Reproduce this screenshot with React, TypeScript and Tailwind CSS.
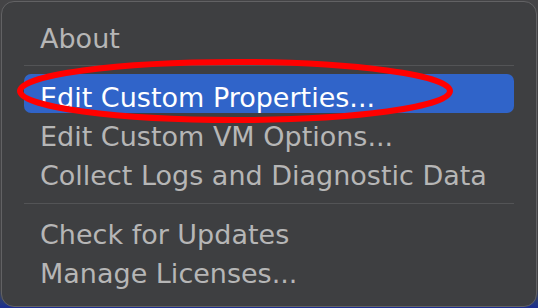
const ITEMS_TOP = ["About"];
const ITEMS_MID = ["Edit Custom Properties...", "Edit Custom VM Options...", "Collect Logs and Diagnostic Data"];
const ITEMS_BOTTOM = ["Check for Updates", "Manage Licenses..."];

function Item({ label, active = false }: { label: string; active?: boolean }) {
  return (
    <div
      className={
        active
          ? "h-[39px] rounded-[7px] bg-[#3064c9] pl-[16px] pt-[8px] leading-[31px] text-white"
          : "h-[39px] pl-[16px] pt-[8px] leading-[31px] text-[#b6b6b6]"
      }
    >
      {label}
    </div>
  );
}

function Separator({ offset }: { offset: "first" | "second" }) {
  return (
    <div className={offset === "first" ? "h-[20px] pt-[11px]" : "h-[20px] pt-[12px]"}>
      <div className="h-px bg-[#535456]" />
    </div>
  );
}

export default function App() {
  return (
    <div className="relative h-[308px] w-[538px] overflow-hidden bg-gradient-to-b from-[#444446] via-[#444446] via-[94%] to-[#1b2c92] p-px">
      <div
        className="h-[306px] w-[536px] rounded-[13px] border border-[#626264] bg-[#3e3f41] px-[22px] pt-[13px] text-[27px] whitespace-nowrap"
        style={{ fontFamily: '"DejaVu Sans", sans-serif' }}
      >
        {ITEMS_TOP.map((label) => (
          <Item key={label} label={label} />
        ))}
        <Separator offset="first" />
        {ITEMS_MID.map((label, i) => (
          <Item key={label} label={label} active={i === 0} />
        ))}
        <Separator offset="second" />
        {ITEMS_BOTTOM.map((label) => (
          <Item key={label} label={label} />
        ))}
      </div>

      {/* red annotation ring */}
      <svg className="pointer-events-none absolute inset-0" width="538" height="308" viewBox="0 0 538 308">
        <ellipse cx="235" cy="91" rx="215" ry="29" fill="none" stroke="#ff0000" strokeWidth="6" />
      </svg>
    </div>
  );
}
